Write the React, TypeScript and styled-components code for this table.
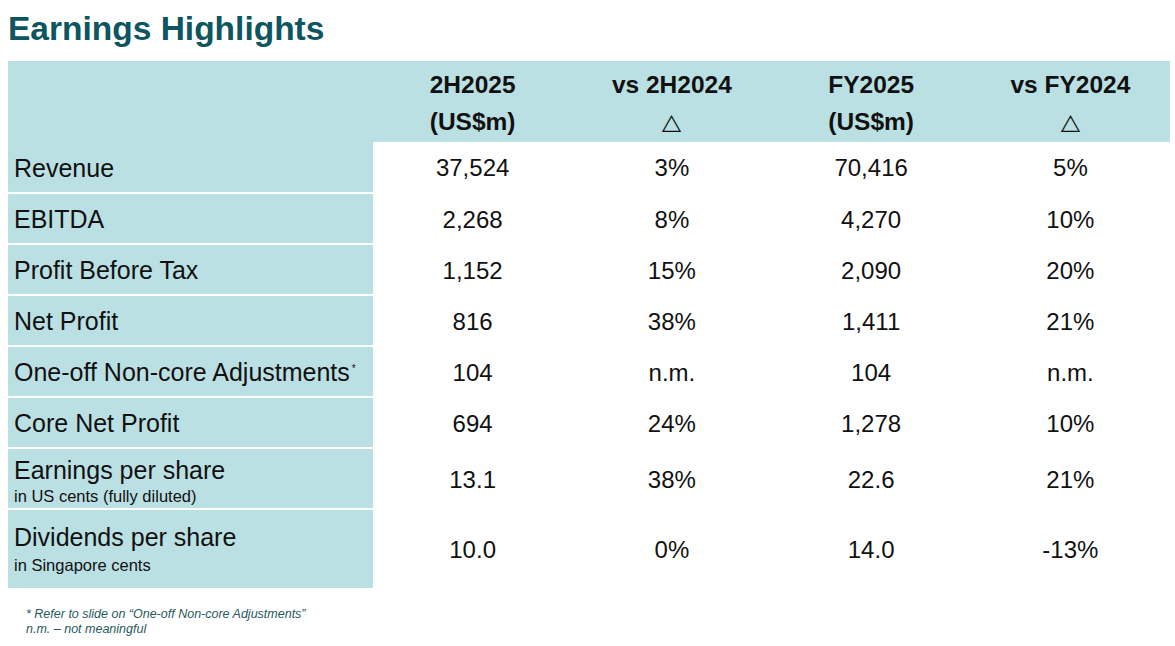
import React from "react";
import styled, { createGlobalStyle } from "styled-components";

const GlobalStyle = createGlobalStyle`
  html, body {
    margin: 0;
    padding: 0;
    background: #ffffff;
  }
  body {
    font-family: "Liberation Sans", Arial, sans-serif;
    color: #111111;
  }
`;

const Page = styled.div`
  width: 1175px;
  height: 646px;
  box-sizing: border-box;
  padding: 9.6px 5px 0 8px;
  display: flex;
  flex-direction: column;
`;

const Title = styled.h1`
  margin: 0 0 13.4px 0;
  font-family: "Liberation Sans", Arial, sans-serif;
  font-size: 33.5px;
  line-height: 38px;
  font-weight: 700;
  color: #0d5560;
`;

const Table = styled.div`
  width: 1162px;
  display: grid;
  grid-template-columns: 365px repeat(4, 1fr);
  grid-template-rows: 81px 50px 51px 51px 51px 51px 51px 61px 80px;
`;

const HeadCell = styled.div`
  background: #bbe0e3;
  display: flex;
  flex-direction: column;
  align-items: center;
  justify-content: center;
  padding-top: 3px;
  font-size: 24.5px;
  line-height: 37px;
  font-weight: 700;
  color: #111111;
`;

const HeadLine = styled.span`
  display: block;
  white-space: nowrap;
`;

const Delta = styled.span`
  display: block;
  font-family: "DejaVu Sans", sans-serif;
  font-weight: 400;
  font-size: 22px;
  line-height: 37px;
  transform: scaleX(1.15);
`;

const LabelCell = styled.div<{ $first?: boolean; $gap?: number; $end?: boolean }>`
  background: #bbe0e3;
  box-sizing: border-box;
  border-top: ${(p) => (p.$first ? "0" : "2px solid #ffffff")};
  padding: 0 0 ${(p) => (p.$end ? "2px" : "0")} 6px;
  display: flex;
  flex-direction: column;
  justify-content: ${(p) => (p.$end ? "flex-end" : "center")};
  gap: ${(p) => p.$gap ?? 0}px;
`;

const LabelMain = styled.span`
  display: block;
  font-size: 25px;
  line-height: 26px;
  padding-top: 2px;
  white-space: nowrap;
`;

const Sup = styled.sup`
  font-size: 10px;
  vertical-align: top;
  position: relative;
  top: -3px;
  margin-left: 2px;
`;

const LabelSub = styled.span`
  display: block;
  font-size: 16.5px;
  line-height: 20px;
  white-space: nowrap;
`;

const ValueCell = styled.div<{ $first?: boolean }>`
  background: #ffffff;
  box-sizing: border-box;
  border-top: ${(p) => (p.$first ? "0" : "2px solid #ffffff")};
  display: flex;
  align-items: center;
  justify-content: center;
  padding-top: 3px;
  font-size: 24px;
  line-height: 26px;
`;

const Notes = styled.div`
  margin: 19px 0 0 18px;
  font-family: "Liberation Sans", Arial, sans-serif;
  font-style: italic;
  font-size: 12.5px;
  line-height: 15.5px;
  color: #1f5a61;
`;

type Row = {
  label: string;
  sup?: boolean;
  sub?: string;
  values: string[];
  gap?: number;
  end?: boolean;
};

const rows: Row[] = [
  { label: "Revenue", values: ["37,524", "3%", "70,416", "5%"] },
  { label: "EBITDA", values: ["2,268", "8%", "4,270", "10%"] },
  { label: "Profit Before Tax", values: ["1,152", "15%", "2,090", "20%"] },
  { label: "Net Profit", values: ["816", "38%", "1,411", "21%"] },
  { label: "One-off Non-core Adjustments", sup: true, values: ["104", "n.m.", "104", "n.m."] },
  { label: "Core Net Profit", values: ["694", "24%", "1,278", "10%"] },
  {
    label: "Earnings per share",
    sub: "in US cents (fully diluted)",
    values: ["13.1", "38%", "22.6", "21%"],
    gap: 3,
    end: true,
  },
  {
    label: "Dividends per share",
    sub: "in Singapore cents",
    values: ["10.0", "0%", "14.0", "-13%"],
    gap: 5,
  },
];

const headers: [string, string][] = [
  ["2H2025", "(US$m)"],
  ["vs 2H2024", "△"],
  ["FY2025", "(US$m)"],
  ["vs FY2024", "△"],
];

export default function App() {
  return (
    <>
      <GlobalStyle />
      <Page>
        <Title>Earnings Highlights</Title>
        <Table>
          <HeadCell />
          {headers.map(([a, b]) => (
            <HeadCell key={a}>
              <HeadLine>{a}</HeadLine>
              {b === "△" ? <Delta>{b}</Delta> : <HeadLine>{b}</HeadLine>}
            </HeadCell>
          ))}
          {rows.map((r, i) => (
            <React.Fragment key={r.label}>
              <LabelCell $first={i === 0} $gap={r.gap} $end={r.end}>
                <LabelMain>
                  {r.label}
                  {r.sup && <Sup>*</Sup>}
                </LabelMain>
                {r.sub && <LabelSub>{r.sub}</LabelSub>}
              </LabelCell>
              {r.values.map((v, j) => (
                <ValueCell key={j} $first={i === 0}>
                  {v}
                </ValueCell>
              ))}
            </React.Fragment>
          ))}
        </Table>
        <Notes>
          <div>* Refer to slide on “One-off Non-core Adjustments”</div>
          <div>n.m. – not meaningful</div>
        </Notes>
      </Page>
    </>
  );
}
